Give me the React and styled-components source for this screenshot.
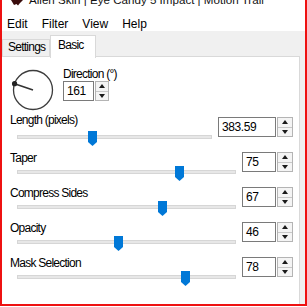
import React from "react";
import styled, { createGlobalStyle } from "styled-components";

const GlobalStyle = createGlobalStyle`
  html, body {
    margin: 0;
    padding: 0;
    background: #ffffff;
  }
  body {
    font-family: "Liberation Sans", Arial, sans-serif;
    color: #000000;
  }
`;

const Frame = styled.div`
  width: 307px;
  height: 306px;
  box-sizing: border-box;
  border: 2px solid #ee1111;
  border-top: 0;
  background: #f0f0f0;
  display: flex;
  flex-direction: column;
  overflow: hidden;
`;

const TitleBar = styled.div`
  height: 17px;
  flex: none;
  background: #ffffff;
  display: flex;
  align-items: flex-start;
  gap: 6px;
  padding-left: 9px;
  overflow: hidden;
`;

const TitleText = styled.div`
  font-size: 11.6px;
  line-height: 14px;
  margin-top: -7px;
  color: #111111;
  white-space: nowrap;
`;

const MenuBar = styled.div`
  height: 14px;
  flex: none;
  background: #ffffff;
  display: flex;
  gap: 14px;
  padding-left: 5px;
`;

const MenuItem = styled.span`
  font-size: 12px;
  line-height: 14px;
`;

const TabStrip = styled.div`
  height: 25px;
  flex: none;
  display: flex;
  align-items: flex-end;
  position: relative;
  z-index: 1;
`;

const Tab = styled.div`
  box-sizing: border-box;
  width: ${(p) => (p.$active ? "46px" : "48px")};
  height: ${(p) => (p.$active ? "23px" : "17px")};
  margin-bottom: ${(p) => (p.$active ? "-2px" : "0")};
  padding: ${(p) => (p.$active ? "2px 0 0 7px" : "0 0 0 5px")};
  border: 1px solid #d9d9d9;
  border-bottom: 0;
  background: ${(p) => (p.$active ? "#ffffff" : "#f0f0f0")};
  font-size: 12px;
  letter-spacing: -0.75px;
  line-height: 14px;
  white-space: nowrap;
`;

const Panel = styled.div`
  flex: 1;
  background: #ffffff;
  border-top: 1px solid #d9d9d9;
  border-right: 1px solid #d9d9d9;
  margin-right: 5px;
  padding: 11px 6px 0 8px;
  display: flex;
  flex-direction: column;
`;

const DialSection = styled.div`
  display: flex;
  align-items: flex-start;
  height: 44px;
  margin-bottom: 5px;
`;

const DialSvg = styled.svg`
  width: 44px;
  height: 44px;
  margin-left: 1px;
  flex: none;
`;

const DirectionColumn = styled.div`
  display: flex;
  flex-direction: column;
  gap: 1px;
  margin-left: 8px;
`;

const FieldLabel = styled.div`
  font-size: 12px;
  letter-spacing: -0.75px;
  line-height: 12px;
  height: 12px;
  white-space: nowrap;
  margin-top: ${(p) => (p.$raise ? "-3px" : "0")};
  margin-bottom: ${(p) => (p.$raise ? "3px" : "0")};
`;

const Row = styled.div`
  display: grid;
  grid-template-columns: 1fr auto;
  column-gap: 6px;
  height: 35px;
`;

const SliderColumn = styled.div`
  display: flex;
  flex-direction: column;
  gap: 2px;
  min-width: 0;
`;

const Slider = styled.div`
  position: relative;
  height: 15px;
  margin-left: 7px;
`;

const Track = styled.div`
  position: absolute;
  left: 0;
  right: 0;
  top: 4px;
  height: 4px;
  box-sizing: border-box;
  background: #e7e7e7;
  border: 1px solid #d6d6d6;
`;

const Thumb = styled.svg`
  position: absolute;
  top: 0;
  width: 9px;
  height: 15px;
`;

const SpinBox = styled.div`
  display: flex;
  gap: 1px;
  height: 20px;
  align-self: start;
`;

const SpinInput = styled.div`
  box-sizing: border-box;
  width: ${(p) => p.$w}px;
  height: 100%;
  border: 1px solid #7a7a7a;
  background: #ffffff;
  padding-left: 3px;
  font-size: 12px;
  letter-spacing: -0.4px;
  line-height: 18px;
`;

const SpinArrows = styled.div`
  box-sizing: border-box;
  width: ${(p) => p.$w}px;
  height: 100%;
  border: 1px solid #b4b4b4;
  background: #f4f4f4;
  display: flex;
  flex-direction: column;
`;

const ArrowButton = styled.div`
  flex: 1;
  display: flex;
  align-items: center;
  justify-content: center;
  & + & {
    border-top: 1px solid #c8c8c8;
  }
`;

const Arrow = styled.span`
  width: 0;
  height: 0;
  border-left: 3px solid transparent;
  border-right: 3px solid transparent;
  ${(p) =>
    p.$down
      ? "border-top: 4px solid #1a1a1a;"
      : "border-bottom: 4px solid #1a1a1a;"}
`;

function Spinner({ value, w, arrowW = 16 }) {
  return (
    <SpinBox>
      <SpinInput $w={w}>{value}</SpinInput>
      <SpinArrows $w={arrowW}>
        <ArrowButton>
          <Arrow />
        </ArrowButton>
        <ArrowButton>
          <Arrow $down />
        </ArrowButton>
      </SpinArrows>
    </SpinBox>
  );
}

function Dial({ angle }) {
  const r = 19.5;
  const rad = (angle * Math.PI) / 180;
  const x = 22 + r * Math.cos(rad);
  const y = 22 - r * Math.sin(rad);
  return (
    <DialSvg viewBox="0 0 44 44">
      <circle cx="22" cy="22" r={r} fill="none" stroke="#3c3c3c" strokeWidth="1.3" />
      <line x1="22" y1="22" x2={x} y2={y} stroke="#333333" strokeWidth="1.6" />
      <circle cx={x} cy={y} r="2.6" fill="#222222" />
    </DialSvg>
  );
}

const rows = [
  { label: "Length (pixels)", value: "383.59", frac: 0.3836, w: 58, raise: true },
  { label: "Taper", value: "75", frac: 0.75, w: 34 },
  { label: "Compress Sides", value: "67", frac: 0.67, w: 34 },
  { label: "Opacity", value: "46", frac: 0.46, w: 34 },
  { label: "Mask Selection", value: "78", frac: 0.78, w: 34 },
];

export default function App() {
  return (
    <>
      <GlobalStyle />
      <Frame>
        <TitleBar>
          <svg width="12" height="6" viewBox="0 0 12 6">
            <path d="M0 0 H12 L9 3 L7 5.5 L5.5 4 L3 5 Z" fill="#3a0c0c" />
          </svg>
          <TitleText>Alien Skin | Eye Candy 5 Impact | Motion Trail</TitleText>
        </TitleBar>
        <MenuBar>
          <MenuItem>Edit</MenuItem>
          <MenuItem>Filter</MenuItem>
          <MenuItem>View</MenuItem>
          <MenuItem>Help</MenuItem>
        </MenuBar>
        <TabStrip>
          <Tab>Settings</Tab>
          <Tab $active>Basic</Tab>
        </TabStrip>
        <Panel>
          <DialSection>
            <Dial angle={161} />
            <DirectionColumn>
              <FieldLabel>Direction (°)</FieldLabel>
              <Spinner value="161" w={31} arrowW={14} />
            </DirectionColumn>
          </DialSection>
          {rows.map((r) => (
            <Row key={r.label}>
              <SliderColumn>
                <FieldLabel $raise={r.raise}>{r.label}</FieldLabel>
                <Slider>
                  <Track />
                  <Thumb
                    viewBox="0 0 9 15"
                    style={{ left: `calc(${r.frac} * (100% - 9px))` }}
                  >
                    <polygon points="0,0 9,0 9,11 4.5,15 0,11" fill="#0078d7" />
                  </Thumb>
                </Slider>
              </SliderColumn>
              <Spinner value={r.value} w={r.w} />
            </Row>
          ))}
        </Panel>
      </Frame>
    </>
  );
}
